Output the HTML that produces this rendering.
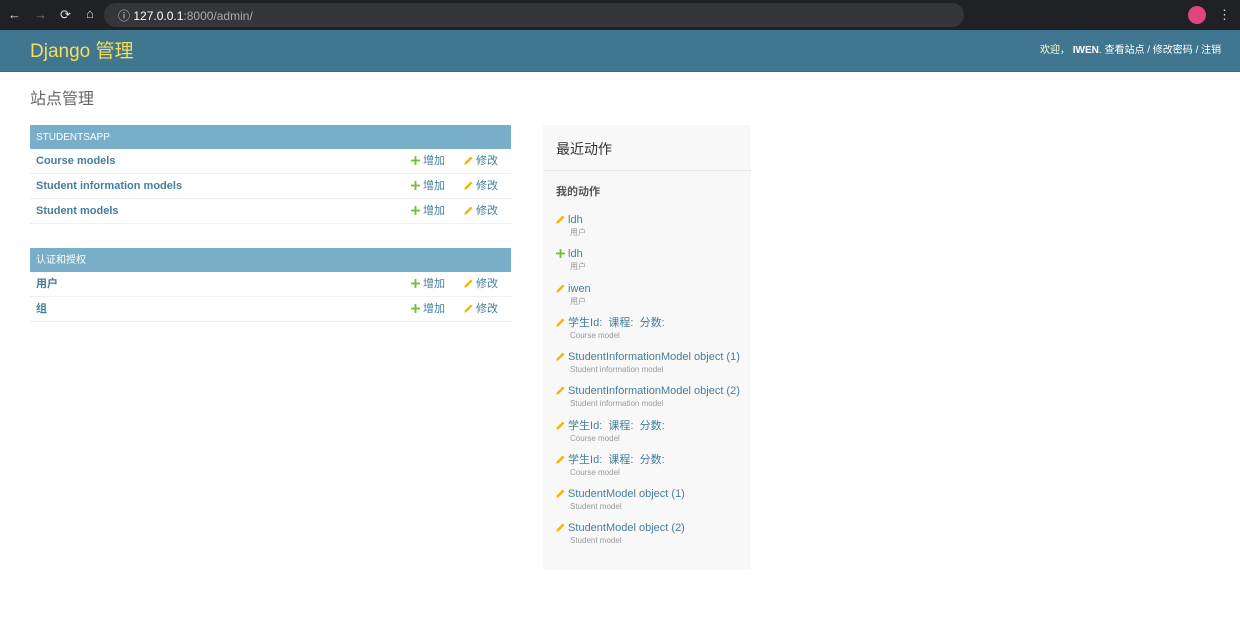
<!DOCTYPE html>
<html><head><meta charset="utf-8"><style>
*{margin:0;padding:0;box-sizing:border-box}
body{width:1240px;height:636px;overflow:hidden;background:#fff;font-family:"Liberation Sans","Noto Sans CJK SC",sans-serif;position:relative}
.chrome{position:absolute;left:0;top:0;width:1240px;height:30px;background:#202124}
.url{position:absolute;left:104px;top:3px;width:860px;height:24px;border-radius:12px;background:#35363a}
.ct{position:absolute;color:#ddd;font-size:13px;line-height:16px}
.hdr{position:absolute;left:0;top:30px;width:1240px;height:42px;background:#417690;border-bottom:1px solid #3a6a80}
.a{position:absolute;white-space:nowrap}
.mh{position:absolute;left:30px;width:481px;height:24px;background:#79aec8;color:#fff;font-size:10px;line-height:26px;padding:0 6px}
.row{position:absolute;left:30px;width:481px;height:25px;border-bottom:1px solid #eee;font-size:11px;line-height:25px}
.row b{position:absolute;left:6px;top:0;color:#447e9b}
.add{position:absolute;left:381px;top:0;color:#447e9b}
.chg{position:absolute;left:434px;top:0;color:#447e9b}
svg{vertical-align:middle;margin-top:-2px}
.it{position:absolute;left:13px;font-size:11px;line-height:14px;color:#447e9b;white-space:nowrap}
.it small{position:absolute;left:14px;top:15px;font-size:8px;line-height:10px;color:#999}
.ra{position:absolute;left:543px;top:125px;width:208px;height:445px;background:#f8f8f8}
</style></head><body>
<svg width="0" height="0" style="position:absolute"><defs>
<symbol id="pl" viewBox="0 0 10 10"><path d="M4 0h2v4h4v2H6v4H4V6H0V4h4z" fill="#70bf2b"/></symbol>
<symbol id="pe" viewBox="0 0 10 10"><path d="M7.5 0.5l2 2L3 9 0.3 9.7 1 7z" fill="#efb80b"/></symbol>
</defs></svg>
<div class="chrome"><div class="url"></div>
<div class="ct" style="left:8px;top:7px">←</div><div class="ct" style="left:34px;top:7px;color:#777">→</div><div class="ct" style="left:60px;top:7px">⟳</div><div class="ct" style="left:86px;top:6px">⌂</div>
<div class="ct" style="left:118px;top:8px;font-size:12px">ⓘ <span style="color:#fff">127.0.0.1</span><span style="color:#aaa">:8000/admin/</span></div>
<div style="position:absolute;left:1188px;top:6px;width:18px;height:18px;border-radius:9px;background:#e0467a"></div>
<div class="ct" style="left:1218px;top:7px">⋮</div>
</div>
<div class="hdr">
<div class="a" style="left:30px;top:10px;font-size:19px;line-height:24px;color:#f5dd5d">Django 管理</div>
<div class="a" style="left:1040px;top:14px;font-size:10px;line-height:14px;color:#ffc">欢迎， <b style="color:#fff">IWEN</b>. <span style="color:#fff">查看站点 / 修改密码 / 注销</span></div>
</div>
<div class="a" style="left:30px;top:90px;font-size:16px;line-height:20px;color:#666">站点管理</div>

<div class="mh" style="top:125px">STUDENTSAPP</div>
<div class="row" style="top:149px"><b>Course models</b><span class="add"><svg width="9" height="9"><use href="#pl"/></svg> 增加</span><span class="chg"><svg width="9" height="9"><use href="#pe"/></svg> 修改</span></div>
<div class="row" style="top:174px"><b>Student information models</b><span class="add"><svg width="9" height="9"><use href="#pl"/></svg> 增加</span><span class="chg"><svg width="9" height="9"><use href="#pe"/></svg> 修改</span></div>
<div class="row" style="top:199px"><b>Student models</b><span class="add"><svg width="9" height="9"><use href="#pl"/></svg> 增加</span><span class="chg"><svg width="9" height="9"><use href="#pe"/></svg> 修改</span></div>
<div class="mh" style="top:248px">认证和授权</div>
<div class="row" style="top:272px"><b>用户</b><span class="add"><svg width="9" height="9"><use href="#pl"/></svg> 增加</span><span class="chg"><svg width="9" height="9"><use href="#pe"/></svg> 修改</span></div>
<div class="row" style="top:297px"><b>组</b><span class="add"><svg width="9" height="9"><use href="#pl"/></svg> 增加</span><span class="chg"><svg width="9" height="9"><use href="#pe"/></svg> 修改</span></div>

<div class="ra">
<div class="a" style="left:13px;top:14px;font-size:14px;line-height:20px;color:#333">最近动作</div>
<div style="position:absolute;left:0;top:45px;width:208px;height:1px;background:#e8e8e8"></div>
<div class="a" style="left:13px;top:60px;font-size:11px;line-height:14px;color:#555;font-weight:bold">我的动作</div>
<div class="it" style="top:88px"><svg width="9" height="9"><use href="#pe"/></svg> ldh<small>用户</small></div>
<div class="it" style="top:122px"><svg width="9" height="9"><use href="#pl"/></svg> ldh<small>用户</small></div>
<div class="it" style="top:157px"><svg width="9" height="9"><use href="#pe"/></svg> iwen<small>用户</small></div>
<div class="it" style="top:191px"><svg width="9" height="9"><use href="#pe"/></svg> 学生Id:&nbsp; 课程:&nbsp; 分数:<small>Course model</small></div>
<div class="it" style="top:225px"><svg width="9" height="9"><use href="#pe"/></svg> StudentInformationModel object (1)<small>Student information model</small></div>
<div class="it" style="top:259px"><svg width="9" height="9"><use href="#pe"/></svg> StudentInformationModel object (2)<small>Student information model</small></div>
<div class="it" style="top:294px"><svg width="9" height="9"><use href="#pe"/></svg> 学生Id:&nbsp; 课程:&nbsp; 分数:<small>Course model</small></div>
<div class="it" style="top:328px"><svg width="9" height="9"><use href="#pe"/></svg> 学生Id:&nbsp; 课程:&nbsp; 分数:<small>Course model</small></div>
<div class="it" style="top:362px"><svg width="9" height="9"><use href="#pe"/></svg> StudentModel object (1)<small>Student model</small></div>
<div class="it" style="top:396px"><svg width="9" height="9"><use href="#pe"/></svg> StudentModel object (2)<small>Student model</small></div>
</div>
</body></html>
